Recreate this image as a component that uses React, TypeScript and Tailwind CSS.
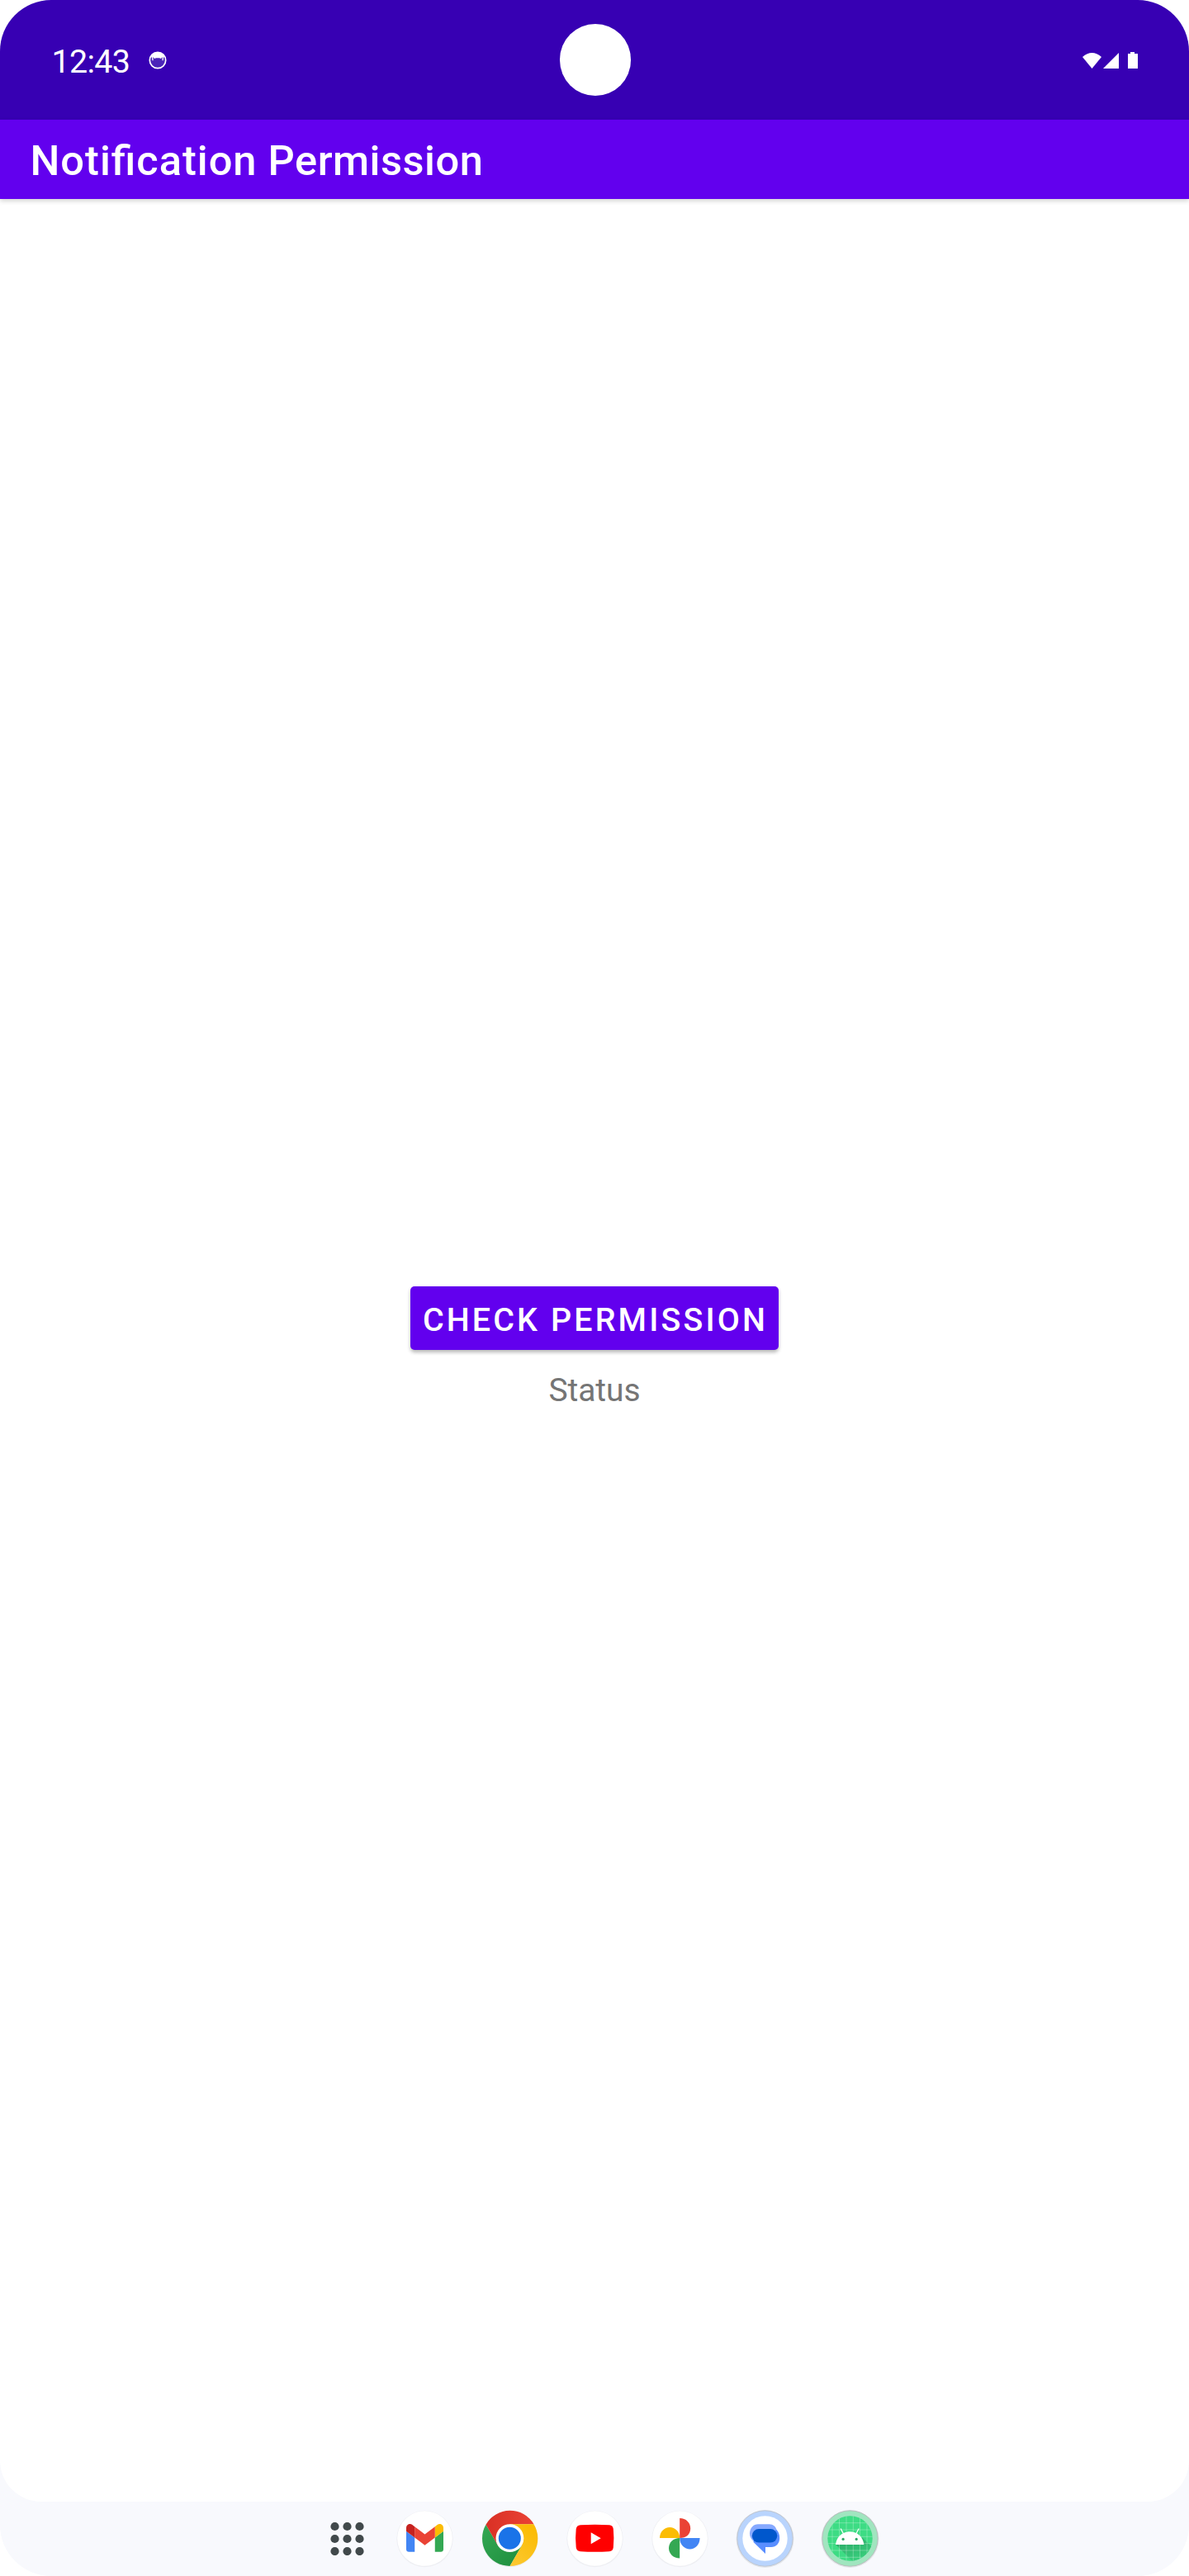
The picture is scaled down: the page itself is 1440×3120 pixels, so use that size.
import type { ReactNode } from 'react';

function StatusBar() {
  return (
    <header className="relative flex h-[145px] shrink-0 items-center justify-between bg-[#3700b3] pr-[62px] pl-[62.5px]">
      <div className="flex items-center">
        <span className="mt-[5px] text-[39.4px] leading-none tracking-[-0.7px] text-white">12:43</span>
        <svg className="mt-[1px] ml-[22.5px] h-[22px] w-[22px]" viewBox="0 0 22 22">
          <circle cx="11" cy="11" r="9.7" fill="#4b24b9" stroke="#fff" strokeWidth="1.7" />
          <path d="M2.6 7.5A9 9 0 0 1 19.4 7.5L16.5 7.2L15 9L13 8.3H9L7 9L5.5 7.2Z" fill="#fff" />
          <path d="M4.500 6.500L5 11.200M17.500 6.500L17 11.200" stroke="#fff" strokeWidth="1.3" />
        </svg>
      </div>
      <div className="absolute top-[29px] left-[677.5px] h-[86.5px] w-[86.5px] rounded-full bg-white" />
      <svg className="h-[22px] w-[68px]" viewBox="1310 61 68 22" fill="#fff">
        <path d="M1311 68Q1322.500 58 1334 68L1322.500 82Z" />
        <path d="M1336 82L1355 63V82Z" />
        <path d="M1366 64H1369V62H1374V64H1378V82H1366Z" />
      </svg>
    </header>
  );
}

function AppIcon({ children }: { children: ReactNode }) {
  return (
    <svg className="h-[67px] w-[67px] shrink-0 overflow-visible" viewBox="0 0 67 67">
      {children}
    </svg>
  );
}

function Disc() {
  return (
    <>
      <circle cx="33.5" cy="34" r="34.2" fill="#eeeff3" />
      <circle cx="33.5" cy="33.5" r="33.3" fill="#fff" />
    </>
  );
}

function Dock() {
  const dots = [5, 20, 35];
  return (
    <footer className="flex h-[90px] shrink-0 items-center rounded-b-[62px] bg-[#f8f9fd] pb-[1px] pl-[400px]">
      <svg className="mr-[40px] h-[40px] w-[41px]" viewBox="-0.5 0 41 40" fill="#41494b">
        {dots.map((y) => dots.map((x) => <circle key={`${x}-${y}`} cx={x} cy={y} r="5.1" />))}
      </svg>
      <div className="flex gap-[36px]">
        <AppIcon>
          <Disc />
          <svg x="11" y="16" width="45" height="34" viewBox="52 42 88 66">
            <path fill="#4285f4" d="M58 108h14V74L52 59v43c0 3.320 2.690 6 6 6" />
            <path fill="#34a853" d="M120 108h14c3.320 0 6-2.690 6-6V59l-20 15" />
            <path fill="#fbbc04" d="M120 48v26l20-15v-8c0-7.420-8.470-11.650-14.400-7.200" />
            <path fill="#ea4335" d="M72 74V48l24 18 24-18v26L96 92" />
            <path fill="#c5221f" d="M52 51v8l20 15V48l-5.600-4.200c-5.940-4.450-14.400-.220-14.400 7.200" />
          </svg>
        </AppIcon>
        <AppIcon>
          <defs>
            <linearGradient id="chrome-red" x1="0" y1="0" x2="1" y2="0">
              <stop offset="0" stopColor="#d93025" />
              <stop offset="1" stopColor="#ea4335" />
            </linearGradient>
            <linearGradient id="chrome-green" x1="1" y1="1" x2="0" y2="0">
              <stop offset="0" stopColor="#1e8e3e" />
              <stop offset="1" stopColor="#34a853" />
            </linearGradient>
            <linearGradient id="chrome-yellow" x1="0" y1="1" x2="0.6" y2="0">
              <stop offset="0" stopColor="#fcc934" />
              <stop offset="1" stopColor="#fbbc04" />
            </linearGradient>
          </defs>
          <circle cx="33.5" cy="34" r="34" fill="#e9eaee" />
          <path fill="url(#chrome-green)" d="M33.500 67A33.500 33.500 0 0 1 4.500 16.750L19 41.900L33.500 33.500L48 41.900Z" />
          <path fill="url(#chrome-red)" d="M4.500 16.750A33.500 33.500 0 0 1 62.500 16.250H33.500V33.500L19 41.900Z" />
          <path fill="url(#chrome-yellow)" d="M62.500 16.250A33.500 33.500 0 0 1 33.500 67L48 41.900L33.500 33.500V16.250Z" />
          <circle cx="33.4" cy="33.2" r="16.9" fill="#fff" />
          <circle cx="33.3" cy="33.2" r="13.5" fill="#1a73e8" />
        </AppIcon>
        <AppIcon>
          <Disc />
          <path
            fill="#f00"
            d="M16 17.300Q33.500 16.200 51 17.300Q55.200 17.600 55.800 22Q57 33.300 55.800 44.500Q55.200 49 51 49.200Q33.500 50.400 16 49.200Q11.500 49 10.700 44.500Q9.400 33.300 10.700 22Q11.500 17.600 16 17.300Z"
          />
          <path fill="#fff" d="M28.700 26.300L40.700 33.300L28.700 40.200Z" />
        </AppIcon>
        <AppIcon>
          <Disc />
          <path fill="#ea4335" d="M33.200 33V9C41 9 46.200 14.500 46.200 21.500S41 33 33.200 33Z" />
          <path fill="#4285f4" d="M33.200 33H57.600C57.600 41 52 46.400 45.500 46.400S33.200 41 33.200 33Z" />
          <path fill="#34a853" d="M33.200 33V57.400C25.500 57.400 20 52 20 45.200S25.500 33 33.200 33Z" />
          <path fill="#fbbc04" d="M33.200 33H9C9 25.500 14.500 20 21.200 20S33.200 25.500 33.200 33Z" />
        </AppIcon>
        <AppIcon>
          <circle cx="33.5" cy="34" r="35" fill="#e4e6ea" />
          <circle cx="33.5" cy="33.5" r="33.7" fill="#b9d4fd" stroke="#bcc3cd" strokeWidth="0.9" />
          <circle cx="33.5" cy="33.5" r="27.2" fill="#fff" />
          <path fill="#86a9ff" d="M25 16.300H38.500C43.500 16.300 46.500 19.500 47.500 23L46 38H22C17.500 36 15 32 15 27.500C15 21 19.500 16.300 25 16.300Z" />
          <path fill="#598eff" d="M47.500 23C50 25.500 51.200 29 51.200 33C51.200 39.500 47 44 41 44H34V52L19.500 38L20 35Z" />
          <rect x="17.8" y="22" width="30.5" height="16.6" rx="8.3" fill="#0057cc" />
        </AppIcon>
        <AppIcon>
          <defs>
            <clipPath id="robot-disc">
              <circle cx="33.5" cy="33.5" r="27.2" />
            </clipPath>
            <linearGradient id="robot-shadow" x1="0.2" y1="0" x2="0.7" y2="1">
              <stop offset="0" stopColor="#2ba866" />
              <stop offset="1" stopColor="#3ddc84" />
            </linearGradient>
          </defs>
          <circle cx="33.5" cy="34" r="35" fill="#e4e6ea" />
          <circle cx="33.5" cy="33.5" r="33.7" fill="#a0e5bf" stroke="#b5bbb9" strokeWidth="0.9" />
          <g clipPath="url(#robot-disc)">
            <rect width="67" height="67" fill="#3ddc84" />
            <path fill="url(#robot-shadow)" d="M16 40.700L43 68H67V51L48 32L44 40Z" />
            <path
              d="M12 0V67M20.500 0V67M29 0V67M37.300 0V67M45.500 0V67M54 0V67M0 14.700H67M0 23H67M0 31.300H67M0 39.600H67M0 48H67M0 56.300H67"
              stroke="#fff"
              strokeOpacity="0.3"
              strokeWidth="0.9"
            />
          </g>
          <path fill="#fff" d="M16 40.900C17 32 24 25.200 33.200 25.200S49.400 32 50.300 40.900Z" />
          <path d="M22.400 22L25.300 27.500M43.900 22L41 27.500" stroke="#fff" strokeWidth="1.3" strokeLinecap="round" />
          <circle cx="25.1" cy="34.4" r="1.6" fill="#2fa866" />
          <circle cx="41.200" cy="34.4" r="1.6" fill="#2fa866" />
        </AppIcon>
      </div>
    </footer>
  );
}

export default function App() {
  return (
    <div className="h-[3120px] w-[1440px] bg-white font-['Roboto',sans-serif]">
      <div className="flex h-full flex-col overflow-hidden rounded-[62px] bg-[#f8f9fd]">
        <StatusBar />
        <div className="relative flex h-[96px] shrink-0 items-center bg-[#6200ee] pl-[36.5px] shadow-[0_2px_6px_rgba(0,0,0,0.2)]">
          <h1 className="mt-[5px] text-[50.6px] leading-none font-medium tracking-[0.5px] text-white [font-feature-settings:'liga'_1]">
            <span className="tracking-[0.98px]">Notification</span> Permission
          </h1>
          <div className="absolute inset-x-0 -top-px h-px bg-[#3700b3]" />
        </div>
        <main className="flex flex-1 flex-col items-center rounded-b-[50px] bg-white pt-[1317px]">
          <button className="flex h-[77px] w-[446px] items-center justify-center rounded-[5px] bg-[#6200ee] pt-[5px] pl-[2px] text-[39.4px] leading-none font-medium tracking-[3.13px] whitespace-nowrap text-white shadow-[0_3px_4px_rgba(0,0,0,0.28)]">
            CHECK PERMISSION
          </button>
          <p className="mt-[30px] text-[39px] leading-none tracking-[-0.1px] text-[#757575]">Status</p>
        </main>
        <Dock />
      </div>
    </div>
  );
}
